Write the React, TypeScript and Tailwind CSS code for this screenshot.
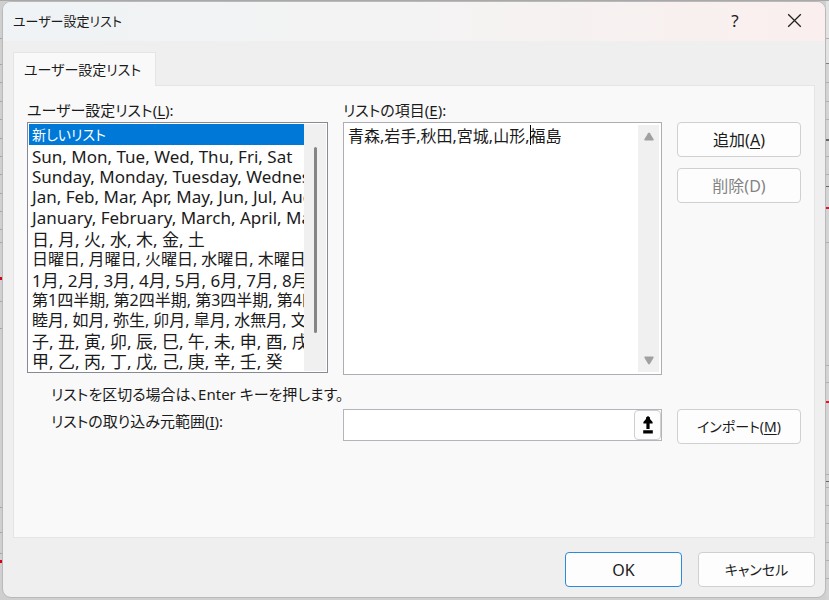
import type { ReactNode } from "react";

const LISTS = [
  { name: "新しいリスト", size: "text-[14px]" },
  { name: "Sun, Mon, Tue, Wed, Thu, Fri, Sat", size: "text-[17px]" },
  { name: "Sunday, Monday, Tuesday, Wednesday, Thursday, Friday, Saturday", size: "text-[17px]" },
  { name: "Jan, Feb, Mar, Apr, May, Jun, Jul, Aug, Sep, Oct, Nov, Dec", size: "text-[17px]" },
  { name: "January, February, March, April, May, June, July, August", size: "text-[17px]" },
  { name: "日, 月, 火, 水, 木, 金, 土", size: "text-[17px]" },
  { name: "日曜日, 月曜日, 火曜日, 水曜日, 木曜日, 金曜日, 土曜日", size: "text-[16px]" },
  { name: "1月, 2月, 3月, 4月, 5月, 6月, 7月, 8月, 9月, 10月, 11月, 12月", size: "text-[17px]" },
  { name: "第1四半期, 第2四半期, 第3四半期, 第4四半期", size: "text-[16px]" },
  { name: "睦月, 如月, 弥生, 卯月, 皐月, 水無月, 文月, 葉月, 長月", size: "text-[16px]" },
  { name: "子, 丑, 寅, 卯, 辰, 巳, 午, 未, 申, 酉, 戌, 亥", size: "text-[17px]" },
  { name: "甲, 乙, 丙, 丁, 戊, 己, 庚, 辛, 壬, 癸", size: "text-[17px]" },
];

function AccessKey({ k }: { k: string }) {
  return (
    <>
      (<span className="underline decoration-1 underline-offset-2">{k}</span>)
    </>
  );
}

function PushButton({
  children,
  primary,
  disabled,
  className,
}: {
  children: ReactNode;
  primary?: boolean;
  disabled?: boolean;
  className: string;
}) {
  const border = primary ? "border-[#2b8adb]" : "border-[#d0d0d0]";
  return (
    <button
      type="button"
      disabled={disabled}
      className={`h-[35px] rounded-[4px] border bg-[#fdfdfd] text-center disabled:text-[#838383] ${border} ${className}`}
    >
      {children}
    </button>
  );
}

/* The worksheet that shows round the edges of the dialog. */
function Worksheet() {
  const left = [38, 64, 82, 101, 119, 138, 156, 174, 193, 211, 229, 242, 301, 328, 507, 532, 553];
  const right = [38, 82, 101, 119, 156, 174, 242, 365, 382, 474, 487, 505, 523, 542, 560, 578];
  return (
    <svg className="absolute inset-0 h-full w-full" viewBox="0 0 829 600" preserveAspectRatio="none" aria-hidden="true">
      <rect width="829" height="600" fill="#cfcfcf" />
      <rect width="829" height="1" fill="#a9a9a9" />
      <rect x="826" y="1" width="3" height="62" fill="#e2e2e2" />
      <rect x="826" y="63" width="3" height="537" fill="#d3d3d3" />
      {left.map((y) => (
        <rect key={y} y={y} width="2" height="1" fill="#a6a6a6" />
      ))}
      {right.map((y) => (
        <rect key={y} x="826" y={y} width="3" height="1" fill="#b0b0b0" />
      ))}
      <rect x="826" y="63" width="3" height="1" fill="#808080" />
      <rect x="826" y="139" width="3" height="2" fill="#666" />
      <rect x="826" y="186" width="3" height="1" fill="#666" />
      <rect x="826" y="481" width="3" height="1" fill="#666" />
      <rect y="277" width="2" height="3" fill="#d9001b" />
      <rect y="560" width="2" height="3" fill="#d9001b" />
      <rect x="826" y="207" width="3" height="2" fill="#e8102a" />
      <rect x="826" y="401" width="3" height="2" fill="#e8102a" />
    </svg>
  );
}

export default function App() {
  return (
    <div className="relative flex min-h-screen pt-px pr-[3px] pb-[2px] pl-[2px] font-['Noto_Sans','Noto_Sans_CJK_JP',sans-serif] text-[15px] leading-5 text-[#1b1b1b] [font-feature-settings:'palt']">
      <Worksheet />
      <div
        role="dialog"
        aria-label="ユーザー設定リスト"
        className="relative flex min-w-0 flex-1 flex-col overflow-hidden rounded-[9px] border border-[#b9b9b9] bg-[#efefef]"
      >
        <header className="flex h-[39px] items-center bg-linear-to-r from-[#eff3f5] via-[#f4f3f3] to-[#faefee] pr-[19px] pb-[2px] pl-[10px]">
          <h1 className="flex-1 text-[13px]">ユーザー設定リスト</h1>
          <button type="button" aria-label="ヘルプ" className="mr-[37px] w-5 text-center text-[17px]">
            ?
          </button>
          <button type="button" aria-label="閉じる" className="flex w-6 justify-center">
            <svg width="15" height="15" viewBox="0 0 15 15" fill="none" stroke="#222" strokeWidth="1.3">
              <path d="M1.2 1.2 13.8 13.8M13.8 1.2 1.2 13.8" />
            </svg>
          </button>
        </header>

        <main className="flex flex-1 flex-col px-[10px] pt-[11px] pb-[10px]">
          <div role="tablist" className="flex">
            <button
              type="button"
              role="tab"
              aria-selected="true"
              className="relative -mb-px h-[34px] w-[143px] border border-b-0 border-[#e5e5e5] bg-[#f9f9f9] pr-1 text-center text-[14px]"
            >
              ユーザー設定リスト
            </button>
          </div>

          <section className="flex-1 border border-[#e5e5e5] bg-[#f9f9f9] px-[13px] pt-[14px]">
            <div className="grid grid-cols-[minmax(0,301fr)_minmax(0,319fr)_124px] gap-x-[15px]">
              <div>
                <label htmlFor="lists" className="block h-[22px] whitespace-nowrap">
                  ユーザー設定リスト
                  <AccessKey k="L" />:
                </label>
                <div className="flex h-[251px] border border-[#868a92] bg-white p-px">
                  <select
                    id="lists"
                    size={12}
                    defaultValue={LISTS[0].name}
                    className="w-0 min-w-0 flex-1 appearance-none overflow-hidden bg-white outline-none"
                  >
                    {LISTS.map(({ name, size }) => (
                      <option
                        key={name}
                        value={name}
                        className={`h-5 min-h-0 p-0 pl-[3px] nth-[3n+1]:h-[21px] checked:bg-linear-to-r checked:from-[#0078d7] checked:to-[#0078d7] checked:[-webkit-text-fill-color:white] ${size}`}
                      >
                        {name}
                      </option>
                    ))}
                  </select>
                  <div className="flex w-[22px] justify-center bg-[#f0f0f0] pt-[23px]">
                    <div className="h-[186px] w-[3px] rounded-full bg-[#858585]" />
                  </div>
                </div>
              </div>

              <div>
                <label htmlFor="items" className="block h-[22px] whitespace-nowrap">
                  リストの項目
                  <AccessKey k="E" />:
                </label>
                <div className="relative flex h-[253px] border border-[#adadb3] bg-white p-[2px]">
                  <textarea
                    id="items"
                    defaultValue="青森,岩手,秋田,宮城,山形,福島"
                    className="w-0 min-w-0 flex-1 resize-none overflow-hidden px-[2px] text-[16px] leading-[22px] outline-none"
                  />
                  <div className="absolute top-[2px] left-[186px] h-5 w-px bg-black" />
                  <div className="flex w-[21px] flex-col items-center justify-between bg-[#f0f0f0] py-[7px]">
                    <svg width="10" height="9" viewBox="0 0 10 9" fill="#a0a0a0">
                      <path d="M5 0.5Q5.5 0.5 6 1.2L9.6 7.3Q9.8 8.5 8.8 8.5H1.2Q0.2 8.5 0.4 7.3L4 1.2Q4.5 0.5 5 0.5Z" />
                    </svg>
                    <svg width="10" height="9" viewBox="0 0 10 9" fill="#a0a0a0">
                      <path d="M5 8.5Q5.5 8.5 6 7.8L9.6 1.7Q9.8 0.5 8.8 0.5H1.2Q0.2 0.5 0.4 1.7L4 7.8Q4.5 8.5 5 8.5Z" />
                    </svg>
                  </div>
                </div>
              </div>

              <div className="flex flex-col gap-[11px] pt-[22px]">
                <PushButton className="w-full text-[16px]">
                  追加
                  <AccessKey k="A" />
                </PushButton>
                <PushButton className="w-full text-[16px]" disabled>
                  削除(D)
                </PushButton>
              </div>
            </div>

            <div className="grid grid-cols-[minmax(0,301fr)_minmax(0,319fr)_124px] gap-x-[15px] pt-[9px]">
              <div className="flex flex-col gap-[7px] pl-6 whitespace-nowrap">
                <p>リストを区切る場合は、Enter キーを押します。</p>
                <label htmlFor="source">
                  リストの取り込み元範囲
                  <AccessKey k="I" />:
                </label>
              </div>
              <div className="mt-[25px] flex h-8 border border-[#b4b4ba] bg-white">
                <input id="source" type="text" className="min-w-0 flex-1 px-1 outline-none" />
                <button
                  type="button"
                  aria-label="範囲を選択"
                  className="flex w-[27px] items-center justify-center rounded-[4px] border border-[#cfcfcf] bg-[#fdfdfd]"
                >
                  <svg width="12" height="18" viewBox="0 0 12 18" fill="#000">
                    <path d="M6 0 8 1.5V3L10.6 6V7.5H7.6V13H4.4V7.5H1.4V6L4 3V1.5ZM1.2 14.3H10.8V17.4H1.2Z" />
                  </svg>
                </button>
              </div>
              <div className="pt-[25px]">
                <PushButton className="w-full text-[14px]">
                  インポート
                  <AccessKey k="M" />
                </PushButton>
              </div>
            </div>
          </section>

          <footer className="flex justify-end gap-4 pt-[14px]">
            <PushButton className="w-[117px] text-[16px]" primary>
              OK
            </PushButton>
            <PushButton className="w-[117px] text-[14px]">キャンセル</PushButton>
          </footer>
        </main>
      </div>
    </div>
  );
}
